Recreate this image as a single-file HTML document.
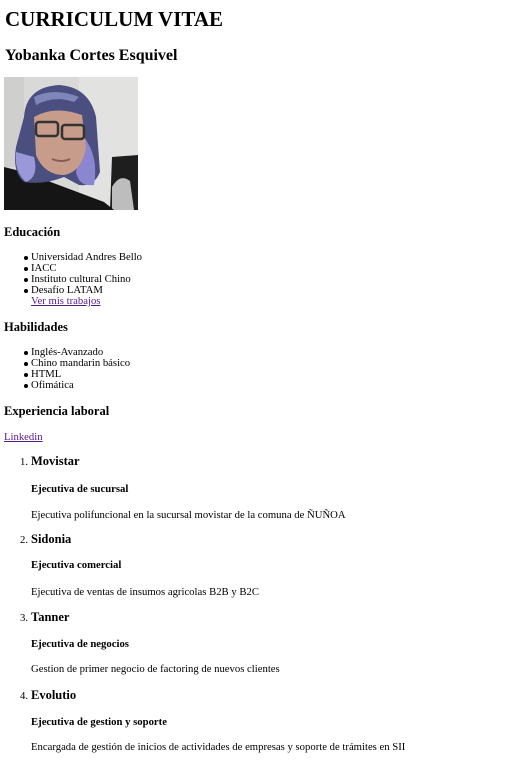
<!DOCTYPE html>
<html><head><meta charset="utf-8"><style>
body{margin:0;background:#fff;font-family:"Liberation Serif",serif;color:#000;width:515px;height:779px;position:relative;overflow:hidden}
.t{position:absolute;white-space:nowrap;line-height:1}
.h1{font-size:21px;font-weight:bold;left:5px}
.h2{font-size:16px;font-weight:bold;left:5px}
.h3{font-size:12.5px;font-weight:bold;left:4px}
.h3b{font-size:12.5px;font-weight:bold;left:31px}
.h4{font-size:10.7px;font-weight:bold;left:31px}
.p{font-size:10.7px;left:31px}
.li{font-size:10.7px;left:31px}
.li:before{content:"";position:absolute;left:-7px;top:4px;width:4px;height:4px;border-radius:50%;background:#000}
a{color:#551a8b;text-decoration:underline}
.n{position:absolute;left:-11px;font-size:10.7px;top:2px;font-weight:normal}
</style></head><body>
<div class="t h1" style="top:9px">CURRICULUM VITAE</div>
<div class="t h2" style="top:48px">Yobanka Cortes Esquivel</div>
<svg style="position:absolute;left:4px;top:77px" width="134" height="133" viewBox="0 0 134 133">
<rect width="134" height="133" fill="#d9d9d7"/>
<rect x="75" width="59" height="133" fill="#e2e2e0"/>
<rect x="0" y="0" width="20" height="90" fill="#cfcfcd"/>
<path d="M108 80 L134 78 L134 133 L106 133 Z" fill="#1e1e1e"/>
<path d="M108 110 Q116 96 126 104 L130 133 L108 133 Z" fill="#bdbdbd"/>
<path d="M0 90 L20 95 L60 110 L100 125 L110 133 L0 133 Z" fill="#151515"/>
<path d="M20 40 Q22 10 55 8 Q85 10 92 40 L96 95 Q90 110 75 108 L60 100 Q40 108 20 105 Q8 95 12 70 Z" fill="#4a4f80"/>
<path d="M12 75 Q10 95 22 105 Q35 100 30 80 Z" fill="#9a98d8"/>
<path d="M80 60 Q95 80 90 108 Q75 110 72 95 Z" fill="#8a86d0"/>
<path d="M30 20 Q50 10 75 20 L70 25 Q50 18 32 28 Z" fill="#7f86b8"/>
<path d="M30 40 Q50 28 78 38 L82 70 Q78 95 60 98 Q40 98 32 78 Z" fill="#c79c8a"/>
<rect x="32" y="45" width="22" height="14" rx="3" fill="none" stroke="#333" stroke-width="2.5"/>
<rect x="58" y="48" width="22" height="14" rx="3" fill="none" stroke="#333" stroke-width="2.5"/>
<path d="M48 82 Q58 86 66 82" stroke="#8a5a55" stroke-width="2" fill="none"/>
</svg>
<div class="t h3" style="top:226px">Educación</div>
<div class="t li" style="top:252px">Universidad Andres Bello</div>
<div class="t li" style="top:263px">IACC</div>
<div class="t li" style="top:274px">Instituto cultural Chino</div>
<div class="t li" style="top:285px">Desafío LATAM</div>
<div class="t p" style="top:296px"><a>Ver mis trabajos</a></div>
<div class="t h3" style="top:321px">Habilidades</div>
<div class="t li" style="top:347px">Inglés-Avanzado</div>
<div class="t li" style="top:358px">Chino mandarin básico</div>
<div class="t li" style="top:369px">HTML</div>
<div class="t li" style="top:380px">Ofimática</div>
<div class="t h3" style="top:405px">Experiencia laboral</div>
<div class="t p" style="top:432px;left:4px"><a>Linkedin</a></div>

<div class="t h3b" style="top:455px"><span class="n">1.</span>Movistar</div>
<div class="t h4" style="top:484px">Ejecutiva de sucursal</div>
<div class="t p" style="top:510px">Ejecutiva polifuncional en la sucursal movistar de la comuna de ÑUÑOA</div>

<div class="t h3b" style="top:533px"><span class="n">2.</span>Sidonia</div>
<div class="t h4" style="top:560px">Ejecutiva comercial</div>
<div class="t p" style="top:587px">Ejecutiva de ventas de insumos agricolas B2B y B2C</div>

<div class="t h3b" style="top:611px"><span class="n">3.</span>Tanner</div>
<div class="t h4" style="top:639px">Ejecutiva de negocios</div>
<div class="t p" style="top:664px">Gestion de primer negocio de factoring de nuevos clientes</div>

<div class="t h3b" style="top:689px"><span class="n">4.</span>Evolutio</div>
<div class="t h4" style="top:717px">Ejecutiva de gestion y soporte</div>
<div class="t p" style="top:742px">Encargada de gestión de inicios de actividades de empresas y soporte de trámites en SII</div>
</body></html>
